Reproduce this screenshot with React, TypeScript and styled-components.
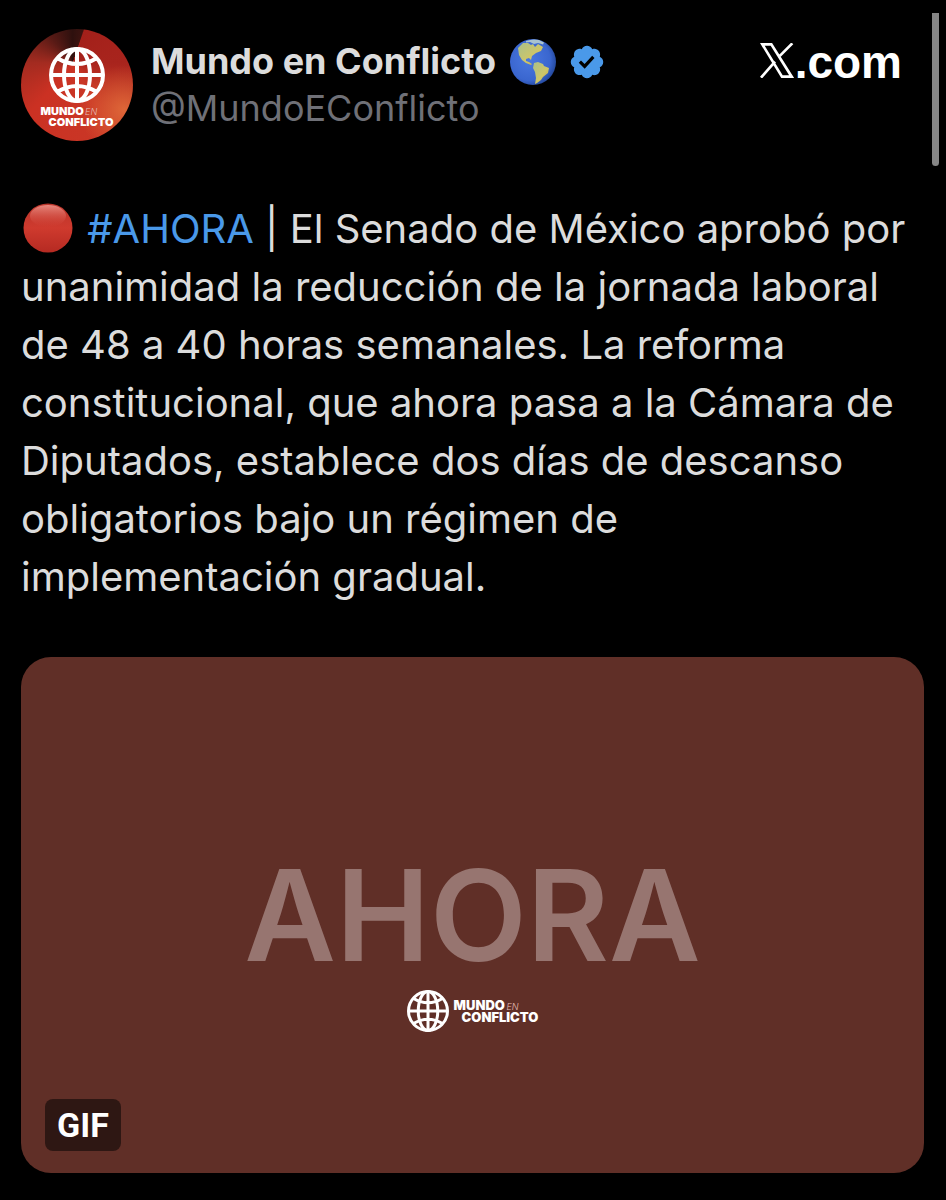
import React from 'react';
import styled, { createGlobalStyle } from 'styled-components';

const GlobalStyle = createGlobalStyle`
  *, *::before, *::after { box-sizing: border-box; }
  body { margin: 0; background: #000; }
`;

const Page = styled.main`
  position: relative;
  min-height: 100vh;
  padding: 29px 22px 27px 21px;
  background: #000;
  color: #dcdcdc;
  font-family: Inter, 'Liberation Sans', sans-serif;
`;

const ScrollThumb = styled.div`
  position: absolute;
  top: 13px;
  right: 7px;
  width: 7px;
  height: 153px;
  border-radius: 0 0 4px 4px;
  background: #868686;
`;

const Header = styled.header`
  display: flex;
  align-items: flex-start;
  gap: 18px;
`;

const Avatar = styled.div`
  flex: none;
  display: flex;
  flex-direction: column;
  align-items: center;
  gap: 3px;
  width: 112px;
  height: 112px;
  padding-top: 18px;
  border-radius: 50%;
  overflow: hidden;
  background:
    radial-gradient(circle at 92% 72%, rgba(226, 108, 58, 0.9) 0, rgba(214, 70, 42, 0) 34%),
    conic-gradient(from 20deg at 46% 30%, #a3201a 0deg, #a8241d 70deg, #c93726 130deg, #cb3123 200deg, #a32b20 250deg, #571a15 300deg, #2e100e 340deg, #3b1310 358deg, #a3201a 360deg);
`;

const Identity = styled.div`
  flex: 1;
  min-width: 0;
  padding-top: 9px;
`;

const NameRow = styled.div`
  display: flex;
  align-items: center;
  height: 47px;
`;

const Name = styled.h1`
  margin: 0;
  font-size: 36px;
  line-height: 47px;
  font-weight: 700;
  white-space: nowrap;
`;

const Earth = styled.svg`
  flex: none;
  width: 46px;
  height: 46px;
  margin-left: 14px;
`;

const Verified = styled.svg`
  flex: none;
  width: 38px;
  height: 38px;
  margin-left: 12px;
  fill: #4a99e9;
`;

const Handle = styled.a`
  display: block;
  color: #6f7077;
  font-size: 36px;
  line-height: 47px;
  text-decoration: none;
`;

const SiteLink = styled.a`
  flex: none;
  display: flex;
  align-items: baseline;
  gap: 1px;
  margin: 10px 22px 0 0;
  color: #fff;
  font: 700 46px/47px 'Liberation Sans', Arial, sans-serif;
  text-decoration: none;
`;

const XMark = styled.svg`
  width: 34px;
  height: 35px;
`;

const PostText = styled.p`
  margin: 59px 0 51px;
  font-size: 40px;
  line-height: 58px;
`;

const RedDot = styled.svg`
  width: 50px;
  height: 50px;
  margin: 0 3px 0 2px;
  vertical-align: -10px;
`;

const Hashtag = styled.a`
  color: #4a99e9;
  text-decoration: none;
`;

const Media = styled.figure`
  position: relative;
  display: flex;
  flex-direction: column;
  align-items: center;
  justify-content: center;
  gap: 28px;
  aspect-ratio: 903 / 516;
  margin: 0;
  padding-top: 70px;
  border-radius: 30px;
  background: #602f27;
`;

const Headline = styled.div`
  color: #977570;
  font-size: 126px;
  line-height: 94px;
  font-weight: 600;
`;

const Brand = styled.div`
  display: flex;
  align-items: center;
  gap: 5px;
`;

const BrandText = styled.div<{ $size: number; $line: number }>`
  color: #fff;
  font-size: ${(p) => p.$size}px;
  line-height: ${(p) => p.$line}px;
  font-weight: 900;
  white-space: nowrap;
`;

const SecondLine = styled.div`
  padding-left: 8px;
`;

const Small = styled.em<{ $size: number }>`
  margin-left: -1px;
  color: #e6bdb5;
  font-size: ${(p) => p.$size}px;
  font-weight: 300;
`;

const GlobeSvg = styled.svg<{ $size: number }>`
  flex: none;
  width: ${(p) => p.$size}px;
  height: ${(p) => p.$size}px;
  fill: none;
  stroke: #fff;
`;

const GifButton = styled.button`
  position: absolute;
  left: 24px;
  bottom: 22px;
  width: 76px;
  height: 52px;
  padding: 0;
  border: 0;
  border-radius: 8px;
  background: #2e1713;
  color: #fff;
  font: 700 34px/52px Roboto, 'Liberation Sans', sans-serif;
`;

function Globe({ size, stroke }: { size: number; stroke: number }) {
  return (
    <GlobeSvg $size={size} viewBox="0 0 56 56" strokeWidth={stroke} aria-hidden="true">
      <circle cx="28" cy="28" r="26" />
      <ellipse cx="28" cy="28" rx="13" ry="26" />
      <path d="M28 2v52M2 28h52M8 11q20 12 40 0M8 45q20-12 40 0" />
    </GlobeSvg>
  );
}

function BrandName({ size, line, small }: { size: number; line: number; small: number }) {
  return (
    <BrandText $size={size} $line={line}>
      <div>
        MUNDO <Small $size={small}>EN</Small>
      </div>
      <SecondLine>CONFLICTO</SecondLine>
    </BrandText>
  );
}

export default function App() {
  return (
    <Page>
      <GlobalStyle />
      <ScrollThumb />
      <article>
        <Header>
          <Avatar>
            <Globe size={56} stroke={4} />
            <BrandName size={11} line={10} small={9} />
          </Avatar>
          <Identity>
            <NameRow>
              <Name>Mundo en Conflicto</Name>
              <Earth viewBox="0 0 46 46" role="img" aria-label="Globo terráqueo">
                <defs>
                  <radialGradient id="sea" cx="42%" cy="45%" r="60%">
                    <stop offset="0" stopColor="#4a78e0" />
                    <stop offset="0.75" stopColor="#3a66cf" />
                    <stop offset="1" stopColor="#23479a" />
                  </radialGradient>
                  <linearGradient id="land" x1="0" y1="0" x2="1" y2="1">
                    <stop offset="0" stopColor="#a9c08a" />
                    <stop offset="0.6" stopColor="#d0c667" />
                    <stop offset="1" stopColor="#b3a04a" />
                  </linearGradient>
                </defs>
                <circle cx="23" cy="23" r="23" fill="url(#sea)" />
                <path fill="#a9c3cf" d="M16 2q7-2.500 13-1l5 2.500-1 2-5-1.500-4 1-4-2-4 .5z" />
                <path fill="url(#land)" d="M8 9l5-5 5 0 3 2 2-1 2 3 3-3 5 3-2 4-5 2-4 3-1 4-2-2-3 1 0 2 3 1 3 2-1 1-5-2-4-3-3-5z" />
                <path fill="url(#land)" d="M24 24l4-1 5 2 1 2 5 2-1 5-5 4-2 3-4 3-2 1 1-6-1-6-2-4z" />
              </Earth>
              <Verified viewBox="0 0 22 22" role="img" aria-label="Cuenta verificada">
                <path d="M20.396 11c-.018-.646-.215-1.275-.57-1.816-.354-.54-.852-.972-1.438-1.246.223-.607.27-1.264.14-1.897-.131-.634-.437-1.218-.882-1.687-.47-.445-1.053-.75-1.687-.882-.633-.13-1.29-.083-1.897.14-.273-.587-.704-1.086-1.245-1.44S11.647 1.62 11 1.604c-.646.017-1.273.213-1.813.568s-.969.854-1.24 1.44c-.608-.223-1.267-.272-1.902-.14-.635.13-1.22.436-1.69.882-.445.47-.749 1.055-.878 1.688-.13.633-.08 1.29.144 1.896-.587.274-1.087.705-1.443 1.245-.356.54-.555 1.17-.574 1.817.02.647.218 1.276.574 1.817.356.54.856.972 1.443 1.245-.224.606-.274 1.263-.144 1.896.13.634.433 1.218.877 1.688.47.443 1.054.747 1.687.878.633.132 1.29.084 1.897-.136.274.586.705 1.084 1.246 1.439.54.354 1.17.551 1.816.569.647-.016 1.276-.213 1.817-.567s.972-.854 1.245-1.44c.604.239 1.266.296 1.903.164.636-.132 1.22-.447 1.68-.907.46-.46.776-1.044.908-1.681s.075-1.299-.165-1.903c.586-.274 1.084-.705 1.439-1.246.354-.54.551-1.17.569-1.816zM9.662 14.85l-3.429-3.428 1.293-1.302 2.072 2.072 4.4-4.794 1.347 1.246z" />
              </Verified>
            </NameRow>
            <Handle href="#perfil">@MundoEConflicto</Handle>
          </Identity>
          <SiteLink href="#x" aria-label="X.com">
            <XMark viewBox="0 0 102 105" fill="none" stroke="#fff" strokeWidth="8" aria-hidden="true">
              <path d="M7 4h27l61 97H66zM97 1L55 43M45 56L3 104" />
            </XMark>
            .com
          </SiteLink>
        </Header>
        <PostText>
          <RedDot viewBox="0 0 50 50" role="img" aria-label="Círculo rojo">
            <defs>
              <linearGradient id="red" x1="0" y1="0" x2="0" y2="1">
                <stop offset="0" stopColor="#b8352b" />
                <stop offset="0.5" stopColor="#cf3a2e" />
                <stop offset="1" stopColor="#b52a22" />
              </linearGradient>
              <linearGradient id="shine" x1="0" y1="0" x2="0" y2="1">
                <stop offset="0" stopColor="#f0998f" stopOpacity="0.85" />
                <stop offset="1" stopColor="#d8483c" stopOpacity="0" />
              </linearGradient>
            </defs>
            <circle cx="25" cy="25" r="24.500" fill="url(#red)" />
            <ellipse cx="25" cy="13" rx="18" ry="11" fill="url(#shine)" />
          </RedDot>{' '}
          <Hashtag href="#ahora">#AHORA</Hashtag> | El Senado de México aprobó por unanimidad la
          reducción de la jornada laboral de 48 a 40 horas semanales. La reforma constitucional, que
          ahora pasa a la Cámara de Diputados, establece dos días de descanso obligatorios bajo un
          régimen de implementación gradual.
        </PostText>
        <Media>
          <Headline>AHORA</Headline>
          <Brand>
            <Globe size={42} stroke={4} />
            <BrandName size={13} line={11} small={9} />
          </Brand>
          <GifButton type="button">GIF</GifButton>
        </Media>
      </article>
    </Page>
  );
}
